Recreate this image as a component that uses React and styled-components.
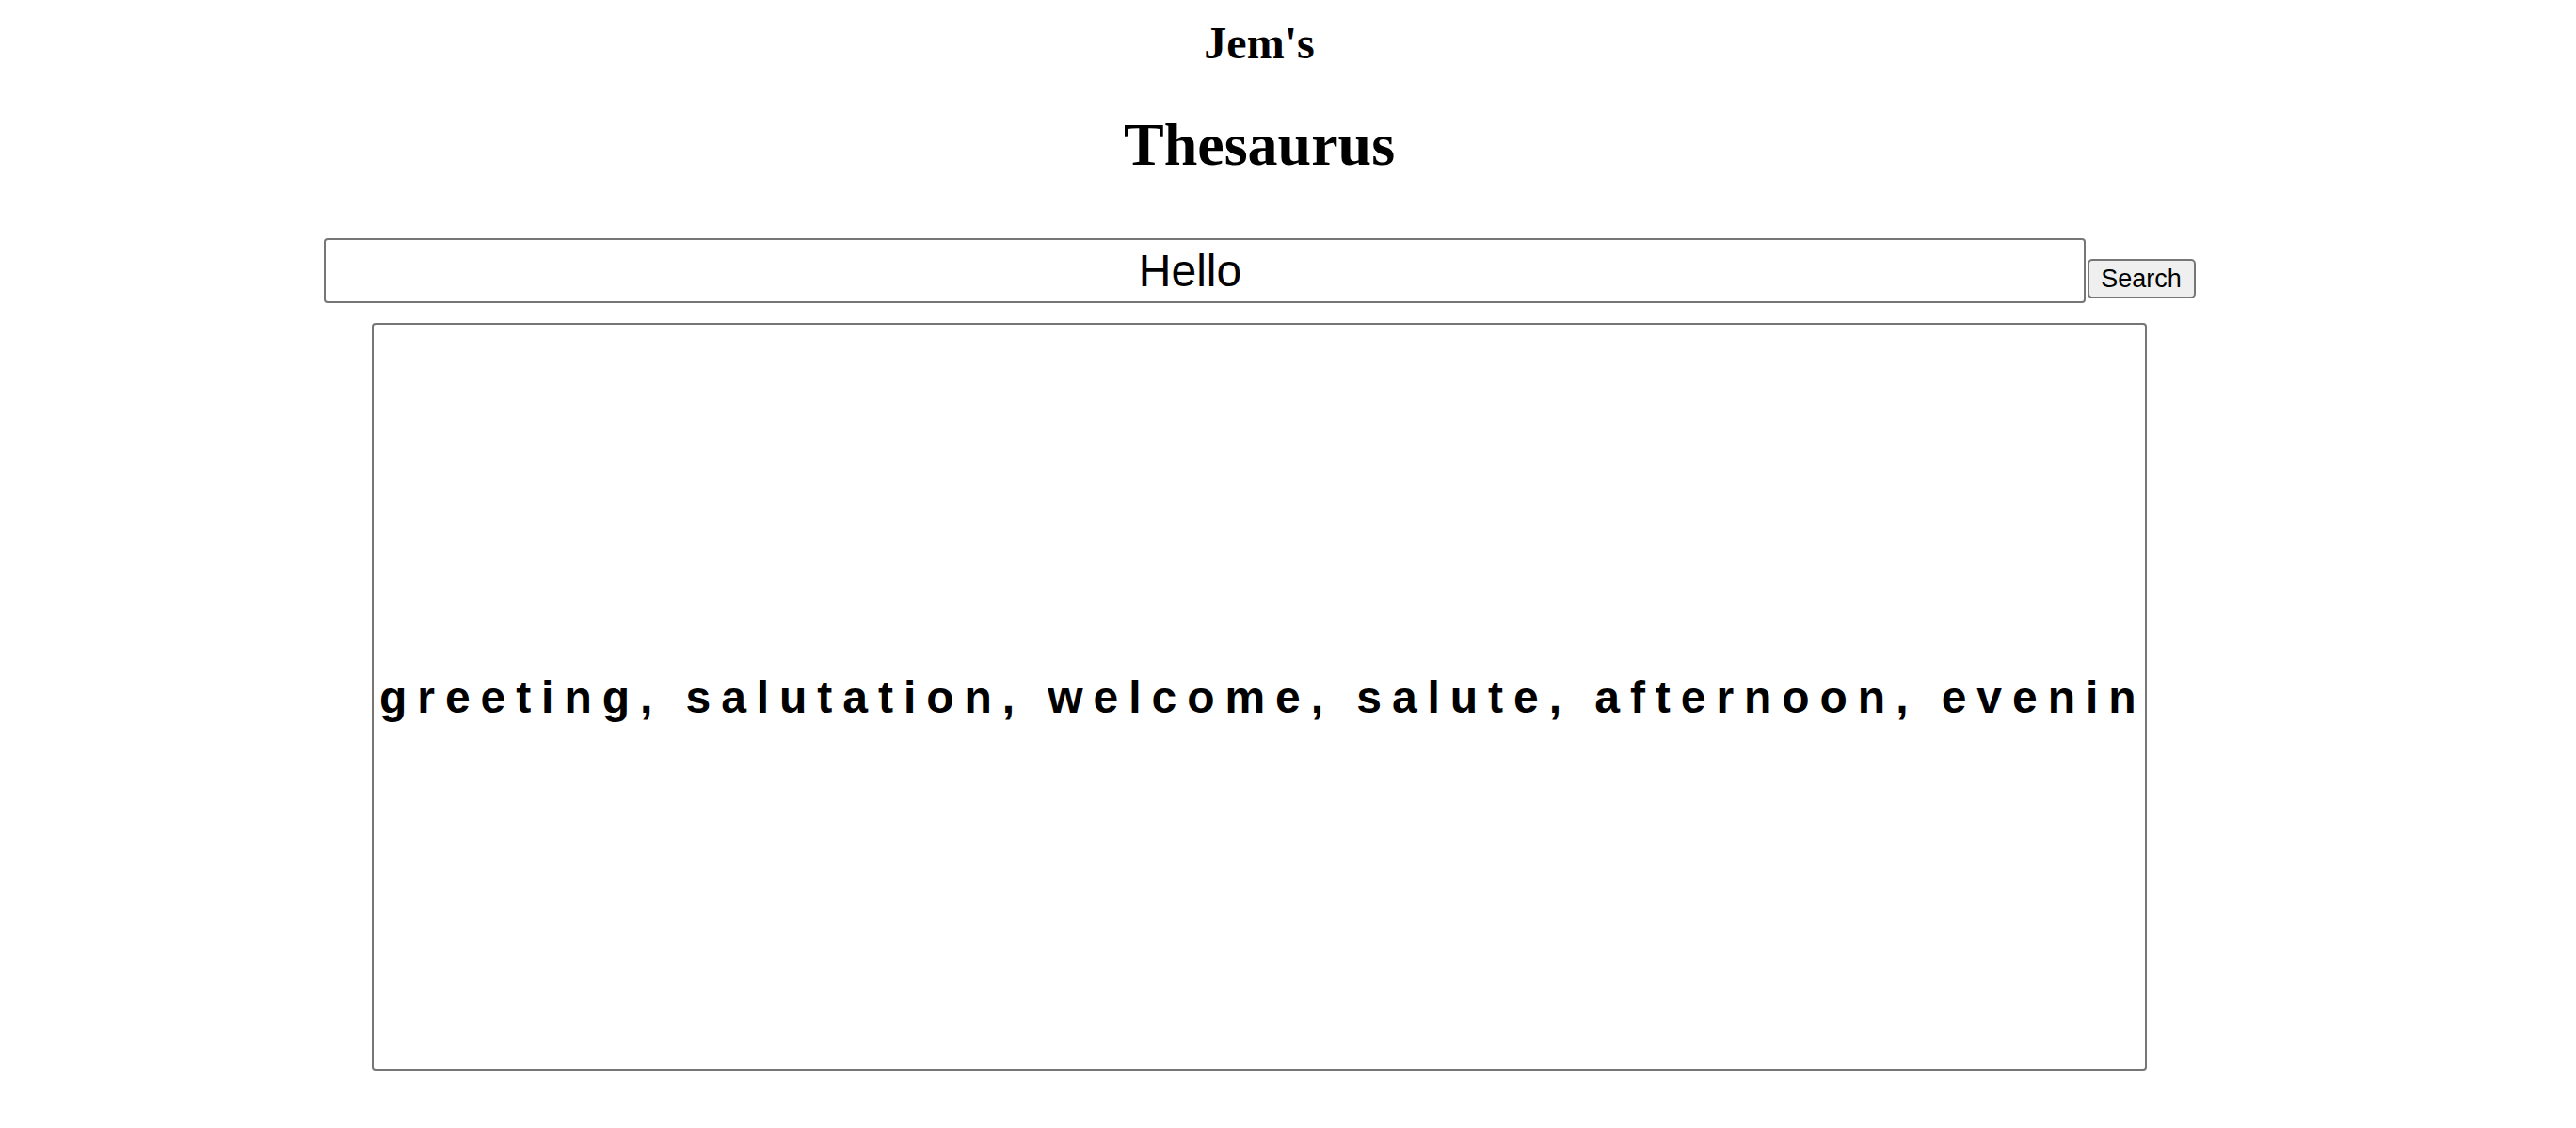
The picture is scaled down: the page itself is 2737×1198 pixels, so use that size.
import React from "react";
import styled, { createGlobalStyle } from "styled-components";

const Global = createGlobalStyle`
  html, body { margin: 0; padding: 0; background: #fff; }
  body { font-family: "Liberation Serif", "Times New Roman", serif; color: #000; }
`;

const Page = styled.div`
  width: 2676px;
  display: flex;
  flex-direction: column;
  align-items: center;
`;

const Brand = styled.h2`
  margin: 18px 0 0;
  font-family: "Liberation Serif", "Times New Roman", serif;
  font-size: 48px;
  font-weight: bold;
  line-height: 55px;
`;

const Title = styled.h1`
  margin: 44px 0 0;
  font-family: "Liberation Serif", "Times New Roman", serif;
  font-size: 64px;
  font-weight: bold;
  line-height: 74px;
`;

const SearchRow = styled.form`
  margin-top: 62px;
  display: flex;
  align-items: flex-end;
  gap: 2px;
`;

const SearchInput = styled.input`
  box-sizing: border-box;
  width: 1872px;
  height: 69px;
  border: 2px solid #767676;
  border-radius: 4px;
  padding: 0 30px 0 0;
  font-family: "Liberation Sans", Arial, sans-serif;
  font-size: 48px;
  text-align: center;
  color: #000;
  background: #fff;
  outline: none;
`;

const SearchButton = styled.button`
  box-sizing: border-box;
  width: 115px;
  height: 42px;
  margin-bottom: 5px;
  padding: 0 10px;
  border: 2px solid #767676;
  border-radius: 5px;
  background: #efefef;
  font-family: "Liberation Sans", Arial, sans-serif;
  font-size: 27px;
  color: #000;
`;

const Results = styled.div`
  box-sizing: border-box;
  margin-top: 21px;
  width: 1886px;
  height: 794px;
  border: 2px solid #767676;
  border-radius: 4px;
  display: flex;
  align-items: center;
  overflow: hidden;
  padding: 0 6px;
`;

const Words = styled.p`
  margin: 0;
  white-space: nowrap;
  font-family: "Liberation Sans", Arial, sans-serif;
  font-size: 48px;
  font-weight: bold;
  letter-spacing: 10.95px;
`;

export default function App() {
  return (
    <>
      <Global />
      <Page>
        <Brand>Jem's</Brand>
        <Title>Thesaurus</Title>
        <SearchRow onSubmit={(e) => e.preventDefault()}>
          <SearchInput defaultValue="Hello" />
          <SearchButton type="submit">Search</SearchButton>
        </SearchRow>
        <Results>
          <Words>
            greeting, salutation, welcome, salute, afternoon, evening, morning, hi, howdy
          </Words>
        </Results>
      </Page>
    </>
  );
}
